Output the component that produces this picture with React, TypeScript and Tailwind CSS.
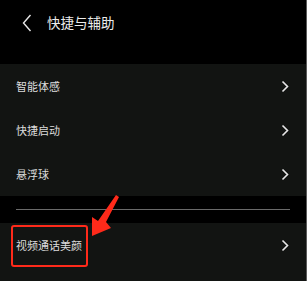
import React from "react";

const Chevron = () => (
  <svg width="8" height="13" viewBox="0 0 8 13" fill="none">
    <path d="M1.5 1.5 L6.5 6.5 L1.5 11.5" stroke="#e8e8e8" strokeWidth="1.6" />
  </svg>
);

const Row = ({ label }: { label: string }) => (
  <div className="flex h-[44px] items-center justify-between pl-[16px] pr-[17px]">
    <span className="text-[11px] text-[#dcdcdc]">{label}</span>
    <Chevron />
  </div>
);

export default function App() {
  return (
    <div
      className="relative h-[281px] w-[307px] overflow-hidden border-r border-[#5a5a5a] bg-black"
      style={{ fontFamily: '"Noto Sans CJK SC", "Noto Sans", sans-serif' }}
    >
      <div className="flex h-[64px] items-start pt-[12px]">
        <div className="ml-[22px] mt-[2px]">
          <svg width="10" height="18" viewBox="0 0 10 18" fill="none">
            <path d="M8.5 1 L1.5 9 L8.5 17" stroke="#e8e8e8" strokeWidth="1.4" />
          </svg>
        </div>
        <span className="ml-[15px] text-[13.5px] leading-[20px] text-[#ececec]">快捷与辅助</span>
      </div>
      <div className="bg-[#121412]">
        <Row label="智能体感" />
        <Row label="快捷启动" />
        <Row label="悬浮球" />
      </div>
      <div className="flex h-[27px] items-center px-[16px]">
        <div className="h-px w-full bg-[#6a6a6a]" />
      </div>
      <div className="h-[60px] bg-[#121412]">
        <Row label="视频通话美颜" />
      </div>
      <div className="absolute left-[11px] top-[225px] h-[42px] w-[77px] rounded-[3px] border-2 border-[#ff2a1a]" />
      <svg className="absolute left-0 top-0" width="307" height="281" viewBox="0 0 307 281">
        <polygon
          points="119,197 106,222 111,228 92,236 92,217 98,221 116,195"
          fill="#ff2a1a"
        />
      </svg>
    </div>
  );
}
